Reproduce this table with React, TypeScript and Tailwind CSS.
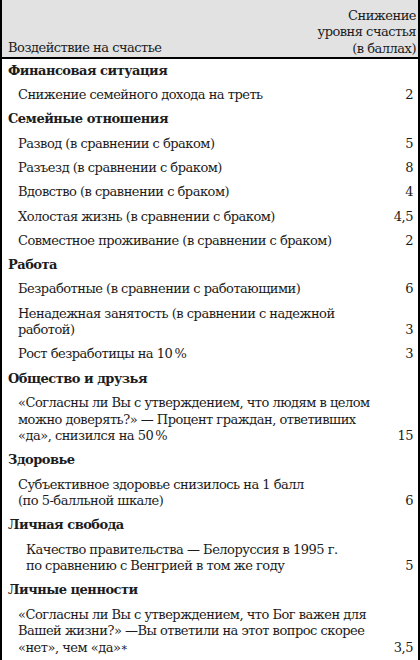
const sections: { title: string; items: { lines: string[]; value: string; indent?: string }[] }[] = [
  {
    title: "Финансовая ситуация",
    items: [{ lines: ["Снижение семейного дохода на треть"], value: "2" }],
  },
  {
    title: "Семейные отношения",
    items: [
      { lines: ["Развод (в сравнении с браком)"], value: "5" },
      { lines: ["Разъезд (в сравнении с браком)"], value: "8" },
      { lines: ["Вдовство (в сравнении с браком)"], value: "4" },
      { lines: ["Холостая жизнь (в сравнении с браком)"], value: "4,5" },
      { lines: ["Совместное проживание (в сравнении с браком)"], value: "2" },
    ],
  },
  {
    title: "Работа",
    items: [
      { lines: ["Безработные (в сравнении с работающими)"], value: "6" },
      { lines: ["Ненадежная занятость (в сравнении с надежной", "работой)"], value: "3" },
      { lines: ["Рост безработицы на 10\u2009%"], value: "3" },
    ],
  },
  {
    title: "Общество и друзья",
    items: [
      {
        lines: [
          "«Согласны ли Вы с утверждением, что людям в целом",
          "можно доверять?» — Процент граждан, ответивших",
          "«да», снизился на 50\u2009%",
        ],
        value: "15",
        indent: "pl-[16px]",
      },
    ],
  },
  {
    title: "Здоровье",
    items: [
      { lines: ["Субъективное здоровье снизилось на 1 балл", "(по 5-балльной шкале)"], value: "6" },
    ],
  },
  {
    title: "Личная свобода",
    items: [
      {
        lines: ["Качество правительства — Белоруссия в 1995 г.", "по сравнению с Венгрией в том же году"],
        value: "5",
        indent: "pl-[24px]",
      },
    ],
  },
  {
    title: "Личные ценности",
    items: [
      {
        lines: [
          "«Согласны ли Вы с утверждением, что Бог важен для",
          "Вашей жизни?» —Вы ответили на этот вопрос скорее",
          "«нет», чем «да»*",
        ],
        value: "3,5",
        indent: "pl-[16px]",
      },
    ],
  },
];

export default function App() {
  return (
    <div className="w-[420px] h-[660px] bg-white text-[#1c1c1c] text-[13px] leading-[16.5px] tracking-[-0.5px] font-['DejaVu_Serif',serif] overflow-hidden">
      <div className="border-x-2 border-b-2 border-black">
        {/* Шапка таблицы */}
        <div className="flex items-end justify-between bg-[#e2e2e2] border-b-2 border-black h-[59px] pl-[6px] pr-[2px]">
          <div className="pb-[1px]">Воздействие на счастье</div>
          <div className="text-right">
            Снижение
            <br />
            уровня счастья
            <br />
            (в баллах)
          </div>
        </div>

        {sections.map((s) => (
          <div key={s.title}>
            <div className="font-bold py-[3.9px] pl-[6px]">{s.title}</div>
            {s.items.map((it, i) => (
              <div key={i} className="flex items-end justify-between py-[3.9px] pr-[5px]">
                <div className={it.indent ?? "pl-[16px]"}>
                  {it.lines.map((l, j) => (
                    <div key={j} className="whitespace-nowrap">
                      {l.endsWith("*") ? (
                        <>
                          {l.slice(0, -1)}
                          <sup className="text-[11px] relative top-[1px] ml-[1px]">*</sup>
                        </>
                      ) : (
                        l
                      )}
                    </div>
                  ))}
                </div>
                <div>{it.value}</div>
              </div>
            ))}
          </div>
        ))}
      </div>
    </div>
  );
}
